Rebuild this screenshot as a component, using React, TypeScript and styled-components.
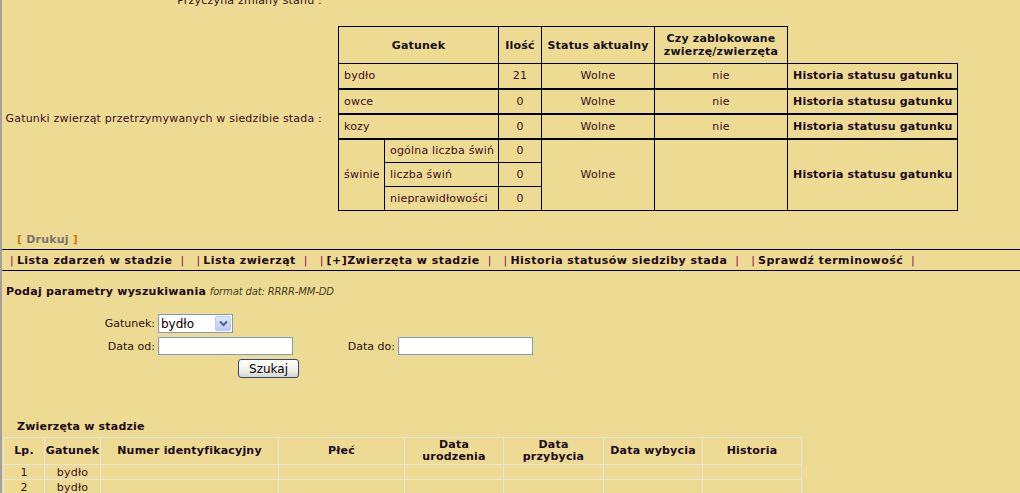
import React from 'react';
import styled, { createGlobalStyle } from 'styled-components';

const Global = createGlobalStyle`
  html, body { margin: 0; padding: 0; background: #eedb93; }
  body {
    font-family: "DejaVu Sans", Verdana, sans-serif;
    font-size: 11px;
    letter-spacing: 0.2px;
    color: #3a0d1f;
  }
`;

const Page = styled.div`
  border-left: 2px solid #a3a09a;
  height: 493px;
  overflow: hidden;
  box-sizing: border-box;
`;

/* ---------- top info grid ---------- */
const InfoGrid = styled.div`
  display: grid;
  grid-template-columns: 320px auto;
  column-gap: 16px;
  row-gap: 17px;
  align-items: center;
  margin-top: -7px;
`;

const FieldLabel = styled.div`
  text-align: right;
  line-height: 16px;
  white-space: nowrap;
`;

const SpeciesTable = styled.table`
  border-collapse: collapse;
  table-layout: fixed;
  width: 620px;
`;

const Col = styled.col<{ $w: number }>`
  width: ${(p) => p.$w}px;
`;

const Row = styled.tr<{ $h: number; $thick?: boolean }>`
  height: ${(p) => p.$h}px;
  & > td {
    border-top-width: ${(p) => (p.$thick ? '2px' : '1px')};
  }
`;

const HeadCell = styled.th<{ $blank?: boolean }>`
  border: ${(p) => (p.$blank ? 'none' : '1px solid #000')};
  font-weight: bold;
  color: #16101e;
  padding: 0 2px;
  line-height: 13px;
  text-align: center;
  white-space: nowrap;
`;

const Cell = styled.td<{ $center?: boolean; $bold?: boolean }>`
  border: 1px solid #000;
  padding: 0 5px;
  line-height: 13px;
  text-align: ${(p) => (p.$center ? 'center' : 'left')};
  font-weight: ${(p) => (p.$bold ? 'bold' : 'normal')};
  color: ${(p) => (p.$bold ? '#1c0a1c' : '#3a0d1f')};
  white-space: nowrap;
`;

/* ---------- print + nav ---------- */
const PrintLine = styled.div`
  margin-top: 22px;
  padding-left: 15px;
  line-height: 14px;
  font-weight: bold;
`;

const Bracket = styled.span`
  color: #c0820c;
`;

const PrintLink = styled.span`
  color: #777470;
`;

const NavBar = styled.nav`
  margin-top: 2px;
  border-top: 1px solid #000;
  border-bottom: 1px solid #000;
  height: 20px;
  display: flex;
  align-items: center;
  padding-left: 8px;
  gap: 12px;
`;

const NavItem = styled.div`
  display: flex;
  align-items: center;
  white-space: nowrap;
`;

const Pipe = styled.span`
  color: #8c0a5c;
`;

const NavLink = styled.a`
  font-weight: bold;
  letter-spacing: 0.45px;
  color: #1c0a14;
  margin: 0 8px 0 3px;
  text-decoration: none;
`;

/* ---------- search ---------- */
const SearchTitle = styled.div`
  margin-top: 14px;
  padding-left: 4px;
  line-height: 14px;
`;

const Strong = styled.b`
  color: #1c0a14;
  letter-spacing: 0.25px;
`;

const Hint = styled.i`
  color: #3d3d1d;
  font-size: 10px;
  letter-spacing: -0.15px;
`;

const SearchForm = styled.form`
  margin-top: 15px;
  display: grid;
  grid-template-columns: 153px 135px 99px 135px;
  column-gap: 3px;
  row-gap: 4px;
  align-items: center;
`;

const FormLabel = styled.label`
  text-align: right;
  white-space: nowrap;
  color: #2a1010;
  letter-spacing: 0;
`;

const SelectBox = styled.div`
  width: 75px;
  height: 19px;
  box-sizing: border-box;
  border: 1px solid #7f9db9;
  background: #fff;
  display: flex;
  align-items: stretch;
`;

const NativeSelect = styled.select`
  appearance: none;
  -webkit-appearance: none;
  border: none;
  background: transparent;
  flex: 1;
  min-width: 0;
  font-family: "DejaVu Sans", Verdana, sans-serif;
  font-size: 12px;
  color: #000;
  padding: 0 0 0 2px;
  outline: none;
`;

const ArrowBtn = styled.span`
  width: 16px;
  margin: 1px;
  box-sizing: border-box;
  border: 1px solid #b9cbf3;
  border-radius: 2px;
  background: linear-gradient(#dde7fd, #b8cbf6);
  display: flex;
  align-items: center;
  justify-content: center;
`;

const TextInput = styled.input`
  width: 135px;
  height: 18px;
  box-sizing: border-box;
  border: 1px solid #7f9db9;
  background: #fff;
  padding: 0 2px;
  font-family: "DejaVu Sans", Verdana, sans-serif;
  font-size: 11px;
`;

const SubmitBtn = styled.button`
  grid-column: 1 / -1;
  justify-self: center;
  margin-left: 2px;
  width: 61px;
  height: 19px;
  box-sizing: border-box;
  border: 1px solid #2b4a7c;
  border-radius: 3px;
  background: linear-gradient(#ffffff, #f1f0ea 60%, #d8d4c8);
  font-family: "DejaVu Sans", Verdana, sans-serif;
  font-size: 12px;
  color: #000;
  padding: 0;
`;

/* ---------- animals table ---------- */
const SectionTitle = styled.div`
  margin-top: 42px;
  padding-left: 15px;
  line-height: 14px;
  font-weight: bold;
  color: #1c0a14;
`;

const AnimalsTable = styled.table`
  margin-left: 1px;
  margin-top: 3px;
  border-collapse: collapse;
  table-layout: fixed;
  width: 798px;
`;

const AHead = styled.th`
  border: 1px solid #e6e4e0;
  font-weight: bold;
  color: #1c0a1c;
  line-height: 12px;
  padding: 0;
  text-align: center;
  height: 26px;
`;

const ACell = styled.td`
  border: 1px solid #e6e4e0;
  line-height: 13px;
  padding: 0;
  height: 14px;
  text-align: center;
  color: #3a0d1f;
`;

const Chevron = () => (
  <svg width="9" height="7" viewBox="0 0 9 7">
    <path d="M1 1.5 L4.5 5 L8 1.5" fill="none" stroke="#4d6185" strokeWidth="2" />
  </svg>
);

const species = [
  { name: 'bydło', qty: '21', status: 'Wolne', blocked: 'nie' },
  { name: 'owce', qty: '0', status: 'Wolne', blocked: 'nie' },
  { name: 'kozy', qty: '0', status: 'Wolne', blocked: 'nie' },
];

const pigRows = [
  { label: 'ogólna liczba świń', qty: '0' },
  { label: 'liczba świń', qty: '0' },
  { label: 'nieprawidłowości', qty: '0' },
];

const navItems = [
  'Lista zdarzeń w stadzie',
  'Lista zwierząt',
  '[+]Zwierzęta w stadzie',
  'Historia statusów siedziby stada',
  'Sprawdź terminowość',
];

const animalCols = [41, 56, 178, 126, 99, 100, 99, 99];

export default function App() {
  return (
    <Page>
      <Global />
      <InfoGrid>
        <FieldLabel>Przyczyna zmiany stanu :</FieldLabel>
        <div />
        <FieldLabel>Gatunki zwierząt przetrzymywanych w siedzibie stada :</FieldLabel>
        <SpeciesTable>
          <colgroup>
            <Col $w={46} />
            <Col $w={114} />
            <Col $w={43} />
            <Col $w={113} />
            <Col $w={133} />
            <Col $w={170} />
          </colgroup>
          <tbody>
            <Row $h={37}>
              <HeadCell colSpan={2}>Gatunek</HeadCell>
              <HeadCell>Ilość</HeadCell>
              <HeadCell>Status aktualny</HeadCell>
              <HeadCell>
                Czy zablokowane
                <br />
                zwierzę/zwierzęta
              </HeadCell>
              <HeadCell $blank />
            </Row>
            {species.map((s, i) => (
              <Row key={s.name} $h={25} $thick={i > 0}>
                <Cell colSpan={2}>{s.name}</Cell>
                <Cell $center>{s.qty}</Cell>
                <Cell $center>{s.status}</Cell>
                <Cell $center>{s.blocked}</Cell>
                <Cell $bold>Historia statusu gatunku</Cell>
              </Row>
            ))}
            {pigRows.map((r, i) => (
              <Row key={r.label} $h={24} $thick={i === 0}>
                {i === 0 && <Cell rowSpan={3}>świnie</Cell>}
                <Cell>{r.label}</Cell>
                <Cell $center>{r.qty}</Cell>
                {i === 0 && (
                  <>
                    <Cell $center rowSpan={3}>
                      Wolne
                    </Cell>
                    <Cell rowSpan={3} />
                    <Cell $bold rowSpan={3}>
                      Historia statusu gatunku
                    </Cell>
                  </>
                )}
              </Row>
            ))}
          </tbody>
        </SpeciesTable>
      </InfoGrid>

      <PrintLine>
        <Bracket>[</Bracket> <PrintLink>Drukuj</PrintLink> <Bracket>]</Bracket>
      </PrintLine>

      <NavBar>
        {navItems.map((n) => (
          <NavItem key={n}>
            <Pipe>|</Pipe>
            <NavLink href="#">{n}</NavLink>
            <Pipe>|</Pipe>
          </NavItem>
        ))}
      </NavBar>

      <SearchTitle>
        <Strong>Podaj parametry wyszukiwania</Strong> <Hint>format dat: RRRR-MM-DD</Hint>
      </SearchTitle>

      <SearchForm onSubmit={(e) => e.preventDefault()}>
        <FormLabel>Gatunek:</FormLabel>
        <SelectBox>
          <NativeSelect defaultValue="bydło">
            <option>bydło</option>
            <option>owce</option>
            <option>kozy</option>
            <option>świnie</option>
          </NativeSelect>
          <ArrowBtn>
            <Chevron />
          </ArrowBtn>
        </SelectBox>
        <div />
        <div />
        <FormLabel>Data od:</FormLabel>
        <TextInput />
        <FormLabel>Data do:</FormLabel>
        <TextInput />
        <SubmitBtn type="submit">Szukaj</SubmitBtn>
      </SearchForm>

      <SectionTitle>Zwierzęta w stadzie</SectionTitle>
      <AnimalsTable>
        <colgroup>
          {animalCols.map((w, i) => (
            <Col key={i} $w={w} />
          ))}
        </colgroup>
        <tbody>
          <tr>
            <AHead>Lp.</AHead>
            <AHead>Gatunek</AHead>
            <AHead>Numer identyfikacyjny</AHead>
            <AHead>Płeć</AHead>
            <AHead>
              Data
              <br />
              urodzenia
            </AHead>
            <AHead>
              Data
              <br />
              przybycia
            </AHead>
            <AHead>Data wybycia</AHead>
            <AHead>Historia</AHead>
          </tr>
          {[1, 2, 3].map((n) => (
            <tr key={n}>
              <ACell>{n}</ACell>
              <ACell>bydło</ACell>
              <ACell />
              <ACell />
              <ACell />
              <ACell />
              <ACell />
              <ACell />
            </tr>
          ))}
        </tbody>
      </AnimalsTable>
    </Page>
  );
}
